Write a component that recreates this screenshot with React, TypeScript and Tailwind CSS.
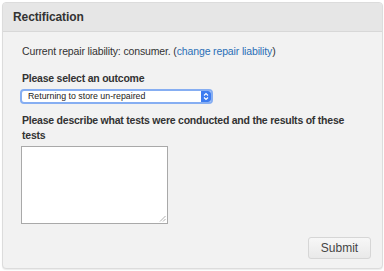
export default function App() {
  return (
    <div className="w-[384px] h-[271px] bg-white p-[2px] pr-[1px] font-['Liberation_Sans',Arial,sans-serif]">
      <div className="h-[267px] rounded-[4px] border border-[#dcdcdc] bg-[#f2f2f2] shadow-[0_1px_1px_rgba(0,0,0,0.08)] overflow-hidden flex flex-col">
        <div className="h-[29px] bg-[#e6e6e6] border-b border-[#d8d8d8] flex items-center pl-[10px]">
          <h1 className="text-[12px] tracking-[-0.1px] font-bold text-[#333]">Rectification</h1>
        </div>
        <div className="flex-1 flex flex-col pl-[17px] pr-[11px] pt-[12px] text-[#333]">
          <p className="pl-[2px] text-[10.5px] tracking-[-0.14px] leading-[15px]">
            Current repair liability: consumer. (
            <a className="text-[#2a6fb6]">change repair liability</a>)
          </p>
          <p className="pl-[2px] mt-[12px] text-[10.5px] tracking-[-0.23px] font-bold leading-[15px]">Please select an outcome</p>
          <div className="mt-[3px] w-[193px] h-[15px] rounded-[4px] bg-white border-2 border-[#86aef2] flex items-center">
            <span className="flex-1 pl-[6px] text-[8.8px] leading-none text-[#222]">Returning to store un-repaired</span>
            <span className="w-[10px] h-[11px] rounded-r-[3px] bg-[#3d7cf0] flex items-center justify-center">
              <svg width="6" height="9" viewBox="0 0 6 9" fill="none" stroke="white" strokeWidth="1.1">
                <path d="M1 3.5 L3 1.5 L5 3.5" />
                <path d="M1 5.5 L3 7.5 L5 5.5" />
              </svg>
            </span>
          </div>
          <p className="pl-[2px] mt-[9px] w-[337px] text-[10.5px] tracking-[-0.23px] font-bold leading-[15px]">
            Please describe what tests were conducted and the results of these tests
          </p>
          <div className="ml-[1px] mt-[3px] relative w-[147px] h-[78px] bg-white border border-[#a9a9a9]">
            <svg className="absolute right-[1px] bottom-[1px]" width="7" height="7" viewBox="0 0 7 7" stroke="#999" strokeWidth="0.8">
              <path d="M6.5 1 L1 6.5" />
              <path d="M6.5 4 L4 6.5" />
            </svg>
          </div>
          <div className="flex justify-end mt-[13px]">
            <button className="w-[63px] h-[22px] rounded-[3px] border border-[#d6d6d6] bg-gradient-to-b from-[#f7f7f7] to-[#e9e9e9] text-[12px] text-[#444]">
              Submit
            </button>
          </div>
        </div>
      </div>
    </div>
  );
}
